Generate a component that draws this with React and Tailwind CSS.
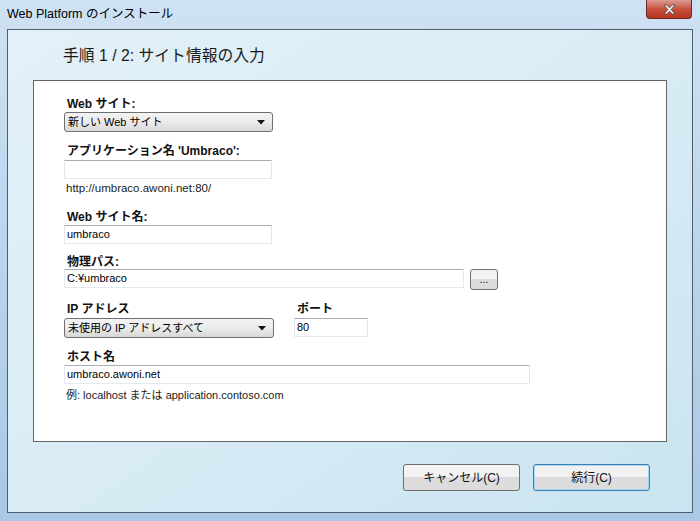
import { useState } from 'react';

const font = { fontFamily: '"Liberation Sans", "Noto Sans CJK JP", sans-serif' };

function Label({ children, className = '' }) {
  return (
    <div className={`h-[16px] leading-[16px] text-[12px] font-bold text-[#111] pl-[3px] ${className}`}>
      {children}
    </div>
  );
}

function TextBox({ value, className = '' }) {
  return (
    <div
      className={`h-[19px] bg-white border border-[#e3e9ef] border-t-[#abadb3] pl-[2px] text-[11px] leading-[17px] text-black ${className}`}
    >
      {value}
    </div>
  );
}

function Select({ value, className = '' }) {
  return (
    <div
      className={`h-[20px] flex items-center justify-between rounded-[3px] border border-[#707070] bg-gradient-to-b from-[#f3f3f3] via-[#ebebeb] to-[#d8d8d8] pl-[3px] pr-[7px] text-[11px] text-black ${className}`}
    >
      <span>{value}</span>
      <svg width="8" height="5" viewBox="0 0 8 5">
        <path d="M0 0h8L4 4.5z" fill="#111" />
      </svg>
    </div>
  );
}

function DlgButton({ children, primary }) {
  return (
    <div
      className={`w-[117px] h-[27px] flex items-center justify-center rounded-[3px] border text-[12px] text-[#111] bg-gradient-to-b from-[#f2f2f2] from-50% to-[#dcdcdc] to-50% ${
        primary ? 'border-[#3c7fb1] shadow-[inset_0_0_0_1px_#a6d8f5]' : 'border-[#707070]'
      }`}
    >
      {children}
    </div>
  );
}

export default function App() {
  const [hover] = useState(false);
  return (
    <div
      className="w-[700px] h-[521px] flex flex-col bg-gradient-to-b from-[#cfe2f3] via-[#b9d4ec] to-[#a9c8e6]"
      style={font}
    >
      {/* Title bar */}
      <div className="h-[29px] flex justify-between">
        <div className="pl-[7px] pt-[6px] text-[12.5px] leading-[16px] text-black">
          Web Platform のインストール
        </div>
        <div
          className={`mr-[8px] w-[46px] h-[19px] rounded-b-[4px] border border-t-0 border-[#6b2a24] flex items-center justify-center bg-gradient-to-b ${
            hover ? 'from-[#e58a7d] to-[#c7371f]' : 'from-[#d99a92] via-[#c8503f] to-[#b8351f]'
          }`}
        >
          <svg width="13" height="11" viewBox="0 0 13 11">
            <path
              d="M1 1h3l2.5 3 2.5-3h3L8 5.5 12 10H9L6.5 7 4 10H1l4-4.5z"
              fill="#fff"
              stroke="#4a4a4a"
              strokeWidth="0.8"
              strokeLinejoin="round"
            />
          </svg>
        </div>
      </div>

      {/* Client area */}
      <div className="mx-[7px] mb-[8px] flex-1 border border-[#4e5e6c] bg-gradient-to-br from-[#e3f1f8] via-[#d9ecf5] to-[#c9e4f0] flex flex-col">
        <div className="pt-[16px] pl-[55px] text-[15.8px] leading-[20px] text-[#1b1b1b]">
          手順 1 / 2: サイト情報の入力
        </div>

        <div className="mt-[14px] ml-[25px] w-[634px] h-[362px] border border-[#646464] bg-white pl-[30px] pt-[15px]">
          <Label>Web サイト:</Label>
          <Select value="新しい Web サイト" className="w-[209px]" />

          <Label className="mt-[11px]">アプリケーション名 'Umbraco':</Label>
          <TextBox value="" className="w-[208px] mt-[1px]" />
          <div className="mt-[1px] pl-[2px] h-[16px] leading-[16px] text-[11.5px] text-[#222]">
            http://umbraco.awoni.net:80/
          </div>

          <Label className="mt-[13px]">Web サイト名:</Label>
          <TextBox value="umbraco" className="w-[208px]" />

          <Label className="mt-[10px]">物理パス:</Label>
          <div className="flex gap-[6px] -mt-[1px]">
            <TextBox value="C:¥umbraco" className="w-[400px]" />
            <div className="w-[28px] h-[21px] rounded-[3px] border border-[#707070] bg-gradient-to-b from-[#f2f2f2] from-50% to-[#dcdcdc] to-50% flex items-center justify-center text-[10px] leading-none text-black">
              ...
            </div>
          </div>

          <div className="flex mt-[11px]">
            <div className="w-[230px]">
              <Label className="h-[17px]">IP アドレス</Label>
              <Select value="未使用の IP アドレスすべて" className="w-[210px]" />
            </div>
            <div>
              <Label className="h-[17px]">ポート</Label>
              <TextBox value="80" className="w-[74px]" />
            </div>
          </div>

          <Label className="mt-[11px]">ホスト名</Label>
          <TextBox value="umbraco.awoni.net" className="w-[466px] border-[#7da2ce] border-t-[#5b86b8]" />
          <div className="mt-[3px] pl-[2px] h-[16px] leading-[16px] text-[11px] text-[#222]">
            例: localhost または application.contoso.com
          </div>
        </div>

        <div className="mt-[22px] flex justify-end gap-[13px] pr-[42px]">
          <DlgButton>キャンセル(C)</DlgButton>
          <DlgButton primary>続行(C)</DlgButton>
        </div>
      </div>
    </div>
  );
}
